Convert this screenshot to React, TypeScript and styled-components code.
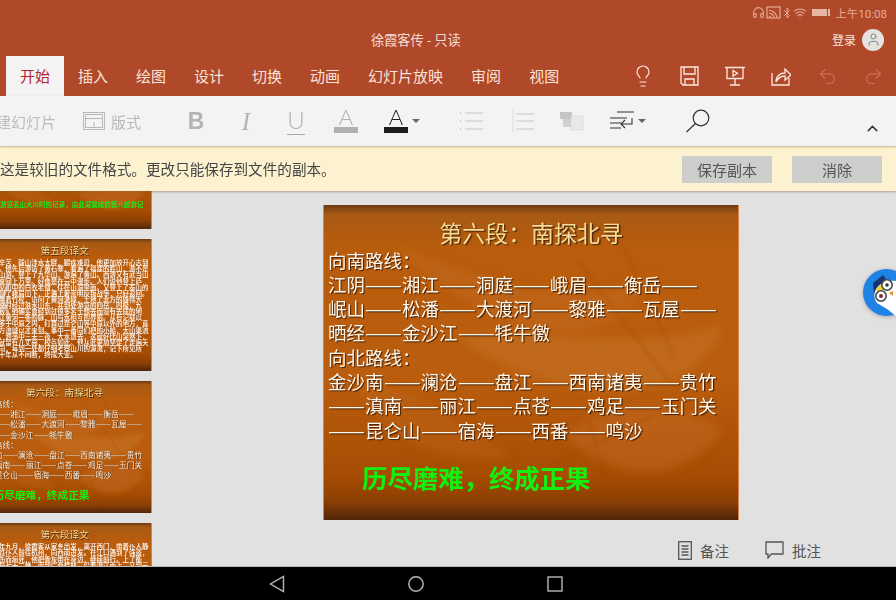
import React from 'react';
import styled, { createGlobalStyle } from 'styled-components';
import { Bluetooth, ChevronUp, Headphones, Lightbulb, Redo2, Undo2, User, Wifi } from 'lucide-react';

const CJK = `"Noto Sans CJK SC", "Noto Sans", sans-serif`;

const GlobalStyle = createGlobalStyle`
  html, body { margin: 0; padding: 0; background: #000; }
  body { font-family: ${CJK}; }
`;

const Screen = styled.div`
  position: relative;
  width: 896px;
  height: 600px;
  overflow: hidden;
  display: flex;
  flex-direction: column;
`;

/* header */
const Header = styled.header`
  height: 96px;
  flex-shrink: 0;
  background: #b0482a;
  color: #fbe6dc;
  display: flex;
  flex-direction: column;
`;

const StatusBar = styled.div`
  height: 25px;
  display: flex;
  align-items: center;
  justify-content: flex-end;
  padding-right: 9px;
  color: #e6ab95;
  font-size: 11.5px;
  font-family: Roboto, ${CJK};
`;

const Battery = styled.span`
  width: 18px;
  height: 7px;
  margin: 0 5px;
  background: linear-gradient(90deg, #e6b5a3 85%, #b0482a 85%, #b0482a 90%, #e6b5a3 90%);
`;

const TitleRow = styled.div`
  height: 31px;
  display: flex;
  align-items: center;
  padding: 0 12px 2px 371px;
  box-sizing: border-box;
`;

const DocTitle = styled.div`
  font-size: 13.2px;
  color: #f7ddd2;
`;

const Login = styled.div`
  margin-left: auto;
  display: flex;
  align-items: center;
  gap: 6px;
  font-size: 12px;
`;

const Avatar = styled.div`
  width: 22px;
  height: 22px;
  border-radius: 50%;
  background: #e6e3df;
  color: #6f7f80;
  display: flex;
  align-items: center;
  justify-content: center;
`;

const TabRow = styled.div`
  height: 40px;
  display: flex;
  padding-left: 6px;
`;

const Tab = styled.div<{ $active?: boolean }>`
  padding: 0 14px 1px;
  display: flex;
  align-items: center;
  font-size: 15px;
  background: ${({ $active }) => ($active ? '#f3f3f3' : 'transparent')};
  color: ${({ $active }) => ($active ? '#b2272c' : '#fbe3d8')};
`;

const QuickIcons = styled.div`
  margin-left: auto;
  display: flex;
  align-items: flex-start;
  margin-top: 9px;
`;

const QuickIcon = styled.div<{ $dim?: boolean }>`
  width: 46px;
  height: 22px;
  display: flex;
  align-items: center;
  justify-content: center;
  color: ${({ $dim }) => ($dim ? '#c9735a' : '#fde8de')};
`;

/* toolbar */
const Toolbar = styled.div`
  height: 50px;
  flex-shrink: 0;
  background: #f3f3f3;
  display: flex;
  align-items: center;
  color: #b4b4b4;
  box-shadow: 0 1px 2px rgba(140, 110, 70, 0.5);
  position: relative;
  z-index: 2;
`;

const NewSlideLabel = styled.div`
  width: 56px;
  overflow: hidden;
  display: flex;
  justify-content: flex-end;
  white-space: nowrap;
  font-size: 15px;
  color: #bdbdbd;
`;

const LayoutButton = styled.div`
  display: flex;
  align-items: center;
  gap: 6px;
  margin-left: 27px;
  font-size: 15px;
  color: #b8b8b8;
`;

const Slot = styled.div<{ $gap?: number; $dark?: boolean }>`
  width: 50px;
  height: 36px;
  flex-shrink: 0;
  margin-left: ${({ $gap }) => $gap ?? 0}px;
  display: flex;
  align-items: center;
  justify-content: center;
  color: ${({ $dark }) => ($dark ? '#222' : '#b4b4b4')};
`;

const CaretSlot = styled(Slot)`
  justify-content: flex-start;
  padding-left: 13px;
  gap: 4px;
  box-sizing: border-box;
`;

const Caret = styled.span<{ $dark?: boolean }>`
  width: 0;
  height: 0;
  border-left: 4px solid transparent;
  border-right: 4px solid transparent;
  border-top: 4px solid ${({ $dark }) => ($dark ? '#666' : '#aaa')};
`;

const Glyph = styled.span<{ $kind: 'bold' | 'italic' | 'under' }>`
  font-size: ${({ $kind }) => ($kind === 'italic' ? 25 : 23)}px;
  line-height: 1;
  font-family: ${({ $kind }) => ($kind === 'italic' ? '"Liberation Serif", serif' : '"Liberation Sans", sans-serif')};
  font-weight: ${({ $kind }) => ($kind === 'bold' ? 700 : 400)};
  font-style: ${({ $kind }) => ($kind === 'italic' ? 'italic' : 'normal')};
  ${({ $kind }) => $kind === 'under' && 'border-bottom: 1px solid #aaa; padding: 0 0 2px; font-family: Lato, sans-serif; font-weight: 300; font-size: 24px;'}
`;

const FontColor = styled.span<{ $color: string }>`
  width: 24px;
  margin-bottom: 3px;
  display: flex;
  flex-direction: column;
  align-items: center;
  font-family: Lato, sans-serif;
  font-weight: 300;
  font-size: 22px;
  line-height: 21px;
  color: ${({ $color }) => $color};
  &::after {
    content: '';
    width: 24px;
    height: 6px;
    background: ${({ $color }) => $color};
  }
`;

const Collapse = styled.div`
  margin-left: auto;
  margin-right: 15px;
  margin-top: 14px;
  color: #333;
  display: flex;
`;

/* notice */
const Notice = styled.div`
  height: 45px;
  flex-shrink: 0;
  background: #fcf2d0;
  display: flex;
  align-items: center;
  color: #444;
  font-size: 14.6px;
  padding-right: 14px;
  gap: 20px;
  box-shadow: 0 1px 2px rgba(120, 100, 60, 0.5);
  position: relative;
  z-index: 1;
`;

const NoticeText = styled.div`
  margin-right: auto;
`;

const NoticeButton = styled.div`
  width: 90px;
  height: 27px;
  margin-top: 1px;
  background: #cdcdcb;
  color: #555;
  font-size: 15px;
  display: flex;
  align-items: center;
  justify-content: center;
`;

/* main */
const Main = styled.main`
  flex: 1;
  min-height: 0;
  display: flex;
  background: #e1e1e1;
  position: relative;
  border-bottom: 1px solid #bbb;
`;

const Strip = styled.div`
  width: 152px;
  flex-shrink: 0;
  overflow: hidden;
  position: relative;
`;

const StripList = styled.div`
  margin-top: -94px;
  display: flex;
  flex-direction: column;
  align-items: flex-end;
  gap: 10px;
`;

const PaneHandle = styled.svg`
  position: absolute;
  left: 0;
  top: 88px;
  color: rgba(225, 225, 225, 0.7);
`;

const Pane = styled.div`
  flex: 1;
  min-width: 0;
  display: flex;
  flex-direction: column;
`;

const SlideWrap = styled.div`
  padding: 14px 0 0 171px;
`;

/* all slide sizes are in em so the thumbnails reuse the same layout */
const SlideFrame = styled.div<{ $size: number; $blur?: number }>`
  position: relative;
  flex-shrink: 0;
  overflow: hidden;
  width: 22.5em;
  height: 17em;
  font-size: ${({ $size }) => $size}px;
  font-family: ${CJK};
  background: linear-gradient(
    180deg,
    #6d3a14 0%,
    #a85a14 3%,
    #b95c0c 14%,
    #bb5d0e 55%,
    #a64c03 86%,
    #8c3f04 94%,
    #4f2609 100%
  );
  box-shadow: inset 1px 0 0 #d8824a, inset -1px 0 0 #d8824a;
  filter: blur(${({ $blur }) => $blur ?? 0.3}px);
`;

const LeafArt = styled.svg`
  position: absolute;
  inset: 0;
  width: 100%;
  height: 100%;
`;

const SlideContent = styled.div`
  position: relative;
`;

const SlideTitle = styled.div`
  font-size: 1.243em;
  line-height: 1.2;
  padding-top: 0.6em;
  margin-bottom: 0.05em;
  text-align: center;
  color: #f5dc96;
  text-shadow: 0.06em 0.06em 0.05em #4a2408;
`;

const RouteText = styled.div`
  padding-left: 0.27em;
  line-height: 1.314;
  color: #fff7ea;
  white-space: nowrap;
  text-shadow: 0.06em 0.06em 0.05em #3f1e06;
`;

/* this font's em dash is narrower than a full cell, stretch the pair to two cells */
const Dash = styled.span`
  display: inline-block;
  width: 2em;
  transform: scaleX(1.19);
  transform-origin: left center;
`;

const Motto = styled.div`
  font-size: 1.373em;
  line-height: 1.2;
  margin-top: 0.81em;
  padding-left: 1.535em;
  color: #14ee10;
  font-weight: 700;
  white-space: nowrap;
`;

const Translation = styled.div`
  font-size: 0.84em;
  line-height: 0.94;
  font-weight: 500;
  color: #fff;
  padding: 0.35em 0.3em 0;
`;

const GreenLine = styled.div`
  font-size: 0.84em;
  font-weight: 700;
  color: #1bea1f;
  padding-top: 15.6em;
  padding-left: 0.5em;
  white-space: nowrap;
  overflow: hidden;
`;

const NotesBar = styled.div`
  flex: 1;
  display: flex;
  align-items: center;
  justify-content: flex-end;
  padding: 15px 75px 0 0;
  color: #555;
  font-size: 14.5px;
`;

const NotesItem = styled.div`
  display: flex;
  align-items: center;
  gap: 8px;
  margin-left: 36px;
`;

const FloatBadge = styled.svg`
  position: absolute;
  left: 863px;
  top: 78px;
  filter: drop-shadow(0 1px 2px rgba(0, 0, 0, 0.25));
`;

const NavBar = styled.nav`
  height: 33px;
  flex-shrink: 0;
  background: #000;
  color: #b8b8b8;
  display: flex;
  align-items: center;
  padding: 0 0 0 269px;
  gap: 123px;
`;

const ROUTE_LINES = [
  '向南路线：',
  '江阴——湘江——洞庭——峨眉——衡岳——',
  '岷山——松潘——大渡河——黎雅——瓦屋——',
  '晒经——金沙江——牦牛徼',
  '向北路线：',
  '金沙南——澜沧——盘江——西南诸夷——贵竹',
  '——滇南——丽江——点苍——鸡足——玉门关',
  '——昆仑山——宿海——西番——鸣沙',
];

const FIFTH_TEXT =
  '他不辞辛苦，跋山涉水太胖，腿疾难忍，他更加放开心志到极远方。他先后游访了黄石寨，看遍了福建的胜山，游不是与建宁山游。登上了九华山，游遍了黄山。西游又有武当山各条，来回上万里。好像是在云中漫步。人们说他登上庐山，遇见山中的白衣老僧，住在山洞里面。又登上了泰山的东面，到了峨眉山下，正遇上奢崇明反叛战争，只好返回。一个人带着竹杖，访问了黄河流域，土地了北方的雄伟大岳，回来时经过淮水山东，并到处游览的四岳，四极，九州，九薮。他确实曾经到过很多名士想去而没有去成的地方。长江黄河一条的脉，山与水相互的界限。从有记载以来，大多于中原之内，打算过昆仑山等中原以外的地方，直到西北方流域以才来到。事中一番同们把的小船，大山渠流了小船。澹荡中三天三夜，大水退去，这就好比山突然下，撞击后就留有几丈高，校点如此。他从此更加坚定了走遍天下的志向，每到一处都仔细考察山川的源流，记下所见所闻，几十年从不间断，终成大业。';

const SIXTH_TEXT =
  '崇祯九年九月，徐霞客从家乡出发，离开西门，带着仆人静闻和顾姓仆人前往杭州，向西南进发。在江口遇到了强盗，静闻被伤而病死，他把骨灰带在身边，继续前行。上了衡山，登岳七十二峰，南到广西桂林，沿着漓江而上，又到云南。';

const LeafPaths = ({ id }: { id: string }) => (
  <LeafArt viewBox="0 0 416 314" preserveAspectRatio="none" aria-hidden="true">
    <defs>
      <filter id={id}>
        <feGaussianBlur stdDeviation="5" />
      </filter>
      <filter id={`${id}-soft`}>
        <feGaussianBlur stdDeviation="1.5" />
      </filter>
    </defs>
    <g filter={`url(#${id})`}>
      <path d="M70 40 C150 70 240 110 330 70 C290 150 190 150 70 40Z" fill="#c66f24" opacity="0.4" />
      <path d="M130 130 C210 120 300 150 400 120 C370 200 250 210 130 130Z" fill="#c87a30" opacity="0.4" />
      <path d="M240 230 C290 190 350 190 400 225 C350 285 290 275 240 230Z" fill="#c46a20" opacity="0.5" />
      <path d="M30 180 C90 170 130 220 190 250 C130 265 70 240 30 180Z" fill="#c66f24" opacity="0.28" />
    </g>
    <g fill="none" stroke="#9a4a06" strokeWidth="2" opacity="0.3" filter={`url(#${id}-soft)`}>
      <path d="M255 55 L345 175" />
      <path d="M300 40 L350 150" />
      <path d="M265 215 L290 300" />
      <path d="M230 260 L330 210" />
    </g>
  </LeafArt>
);

// keeps the dash runs in their own span, see Dash
const RouteLine = ({ line }: { line: string }) => (
  <div>
    {line.split(/(——)/).map((part, i) =>
      part === '——' ? <Dash key={i}>——</Dash> : <span key={i}>{part}</span>,
    )}
  </div>
);

const RouteSlide = ({ size, id, blur }: { size: number; id: string; blur?: number }) => (
  <SlideFrame $size={size} $blur={blur}>
    <LeafPaths id={id} />
    <SlideContent>
      <SlideTitle>第六段：南探北寻</SlideTitle>
      <RouteText>
        {ROUTE_LINES.map((line) => (
          <RouteLine key={line} line={line} />
        ))}
      </RouteText>
      <Motto>历尽磨难，终成正果</Motto>
    </SlideContent>
  </SlideFrame>
);

const TextSlide = ({ size, id, title, text }: { size: number; id: string; title: string; text: string }) => (
  <SlideFrame $size={size} $blur={0.3}>
    <LeafPaths id={id} />
    <SlideContent>
      <SlideTitle>{title}</SlideTitle>
      <Translation>{text}</Translation>
    </SlideContent>
  </SlideFrame>
);

const THUMB_SIZE = 7.77;

const App: React.FC = () => {
  const tabs = ['插入', '绘图', '设计', '切换', '动画', '幻灯片放映', '审阅', '视图'];

  return (
    <Screen>
      <GlobalStyle />
      <Header>
        <StatusBar>
          <Headphones size={13} strokeWidth={2} />
          <svg width="16" height="13" viewBox="-1 0 16 13" fill="none" stroke="currentColor" strokeWidth="1.2">
            <rect x="1" y="1" width="13" height="11" />
            <path d="M3 10.5a2 2 0 0 1 2 1M3 7.5a5 5 0 0 1 5 4M3 4.5a8 8 0 0 1 8 7" />
          </svg>
          <Bluetooth size={12} strokeWidth={2} />
          <Wifi size={14} strokeWidth={1.8} />
          <Battery />
          <span>上午10:08</span>
        </StatusBar>
        <TitleRow>
          <DocTitle>徐霞客传 - 只读</DocTitle>
          <Login>
            登录
            <Avatar>
              <User size={15} strokeWidth={1.5} />
            </Avatar>
          </Login>
        </TitleRow>
        <TabRow>
          <Tab $active>开始</Tab>
          {tabs.map((tab) => (
            <Tab key={tab}>{tab}</Tab>
          ))}
          <QuickIcons>
            <QuickIcon>
              <Lightbulb size={24} strokeWidth={1.2} />
            </QuickIcon>
            <QuickIcon>
              <svg width="19" height="20" viewBox="0 0 19 20" fill="none" stroke="currentColor" strokeWidth="1.3">
                <path d="M1 1h17v18H3l-2-2z" />
                <path d="M4 1v7h11V1M5 19v-6h9v6" />
              </svg>
            </QuickIcon>
            <QuickIcon>
              <svg width="20" height="20" viewBox="0 0 20 20" fill="none" stroke="currentColor" strokeWidth="1.3">
                <path d="M0 1.5h20M2 1.5v11h16v-11M10 12.5V19M5 19h10" />
                <path d="M8 4.5l4.5 2.8L8 10z" />
              </svg>
            </QuickIcon>
            <QuickIcon>
              <svg width="20" height="20" viewBox="0 0 20 20" fill="none" stroke="currentColor" strokeWidth="1.3">
                <path d="M1 7v12h17v-7" />
                <path d="M5 16c0-6 4-9 9-9V3l6 6-6 5v-4c-4 0-7 2-9 6z" />
              </svg>
            </QuickIcon>
            <QuickIcon $dim>
              <Undo2 size={21} strokeWidth={1.3} />
            </QuickIcon>
            <QuickIcon $dim>
              <Redo2 size={21} strokeWidth={1.3} />
            </QuickIcon>
          </QuickIcons>
        </TabRow>
      </Header>

      <Toolbar>
        <NewSlideLabel>新建幻灯片</NewSlideLabel>
        <LayoutButton>
          <svg width="22" height="18" viewBox="0 0 22 18" fill="none" stroke="currentColor" strokeWidth="1">
            <rect x="0.5" y="0.5" width="21" height="17" />
            <rect x="2.5" y="2.5" width="17" height="13" />
            <path d="M2.5 6.5h17M11 10v5.5" />
          </svg>
          版式
        </LayoutButton>
        <Slot $gap={30}>
          <Glyph $kind="bold">B</Glyph>
        </Slot>
        <Slot>
          <Glyph $kind="italic">I</Glyph>
        </Slot>
        <Slot>
          <Glyph $kind="under">U</Glyph>
        </Slot>
        <Slot>
          <FontColor $color="#b0b0b0">A</FontColor>
        </Slot>
        <CaretSlot $dark>
          <FontColor $color="#1c1c1c">A</FontColor>
          <Caret $dark />
        </CaretSlot>
        <Slot $gap={26}>
          <svg width="24" height="22" viewBox="0 0 24 22" fill="none" stroke="#c8c8c8" strokeWidth="1.2">
            <path d="M5 3h18M5 11h18M5 19h18" />
            <path d="M0 3h2M0 11h2M0 19h2" strokeWidth="2" strokeDasharray="1 1" />
          </svg>
        </Slot>
        <Slot>
          <svg width="24" height="24" viewBox="0 0 24 24" fill="none" stroke="#c8c8c8" strokeWidth="1.2">
            <path d="M6 5h18M6 12h18M6 20h18" />
            <path d="M3 0v23" stroke="#dedede" />
          </svg>
        </Slot>
        <Slot>
          <svg width="24" height="22" viewBox="0 0 24 22" aria-hidden="true">
            <rect x="0" y="2" width="12" height="7" fill="#c4c4c4" />
            <rect x="3" y="9" width="9" height="8" fill="#d0d0d0" />
            <rect x="11" y="6" width="12" height="14" fill="#e9e9e9" stroke="#d6d6d6" strokeWidth="0.7" />
          </svg>
        </Slot>
        <CaretSlot $dark>
          <svg width="24" height="22" viewBox="0 0 24 22" fill="none" stroke="#333" strokeWidth="1.1">
            <path d="M7 2h17M0 8h17M0 13h11M0 18h11" />
            <path d="M22 8v6H11M15 10l-4 4 4 4" />
          </svg>
          <Caret $dark />
        </CaretSlot>
        <Slot $gap={26} $dark>
          <svg width="26" height="26" viewBox="0 0 26 26" fill="none" stroke="#333" strokeWidth="1.2">
            <circle cx="16" cy="10" r="7.8" />
            <path d="M10.5 15.5L1.5 24" />
          </svg>
        </Slot>
        <Collapse>
          <ChevronUp size={17} strokeWidth={2} />
        </Collapse>
      </Toolbar>

      <Notice>
        <NoticeText>这是较旧的文件格式。更改只能保存到文件的副本。</NoticeText>
        <NoticeButton>保存副本</NoticeButton>
        <NoticeButton>消除</NoticeButton>
      </Notice>

      <Main>
        <Strip>
          <StripList>
            <SlideFrame $size={THUMB_SIZE} $blur={0.3}>
              <LeafPaths id="leaf-a" />
              <SlideContent>
                <GreenLine>徐霞客游览名山大川时的记录，由此凝聚成的第八部游记</GreenLine>
              </SlideContent>
            </SlideFrame>
            <TextSlide size={THUMB_SIZE} id="leaf-b" title="第五段译文" text={FIFTH_TEXT} />
            <RouteSlide size={THUMB_SIZE} id="leaf-c" blur={0.3} />
            <TextSlide size={THUMB_SIZE} id="leaf-d" title="第六段译文" text={SIXTH_TEXT} />
          </StripList>
          <PaneHandle width="10" height="40" viewBox="0 0 10 40" fill="none" stroke="currentColor" strokeWidth="3">
            <path d="M9 4L2 20l7 16" />
          </PaneHandle>
        </Strip>
        <Pane>
          <SlideWrap>
            <RouteSlide size={18.5} id="leaf-main" />
          </SlideWrap>
          <NotesBar>
            <NotesItem>
              <svg width="14" height="19" viewBox="0 0 14 19" fill="none" stroke="#555" strokeWidth="1.3">
                <rect x="0.7" y="0.7" width="12.6" height="17.6" />
                <path d="M3.5 5h7M3.5 8h7M3.5 11h7M3.5 14h7" />
              </svg>
              备注
            </NotesItem>
            <NotesItem>
              <svg width="19" height="18" viewBox="0 0 19 18" fill="none" stroke="#555" strokeWidth="1.3">
                <path d="M1 1h17v12H6.5L3 17v-4H1z" />
              </svg>
              批注
            </NotesItem>
          </NotesBar>
        </Pane>
        <FloatBadge width="47" height="47" viewBox="0 0 47 47" aria-hidden="true">
          <circle cx="23.5" cy="23.5" r="23.5" fill="#1f83e6" />
          <path d="M10 14 L20 6 L24 12 L18 28 L11 25Z" fill="#17366f" />
          <path d="M14 34 C6 22 18 10 33 12 L33 47 L24 40Z" fill="#fff" />
          <path d="M13 20 L21 13 L23 19 L16 27Z" fill="#f2d52a" />
          <circle cx="24" cy="16" r="5.2" fill="#fff" stroke="#4a4a4a" strokeWidth="1.6" />
          <circle cx="24" cy="16" r="1.8" fill="#333" />
          <circle cx="18" cy="27" r="5.2" fill="#fff" stroke="#4a4a4a" strokeWidth="1.6" />
          <circle cx="18" cy="27" r="2" fill="#7a2f2f" />
          <path d="M26 24l4-2 0 5z" fill="#ef8a1d" />
        </FloatBadge>
      </Main>

      <NavBar>
        <svg width="16" height="18" viewBox="0 0 16 18" fill="none" stroke="currentColor" strokeWidth="1.4">
          <path d="M14.5 1.5v15L1.5 9z" />
        </svg>
        <svg width="16" height="16" viewBox="0 0 16 16" fill="none" stroke="currentColor" strokeWidth="1.4">
          <circle cx="8" cy="8" r="7.2" />
        </svg>
        <svg width="16" height="16" viewBox="0 0 16 16" fill="none" stroke="currentColor" strokeWidth="1.4">
          <rect x="1" y="1" width="14" height="14" />
        </svg>
      </NavBar>
    </Screen>
  );
};

export default App;
